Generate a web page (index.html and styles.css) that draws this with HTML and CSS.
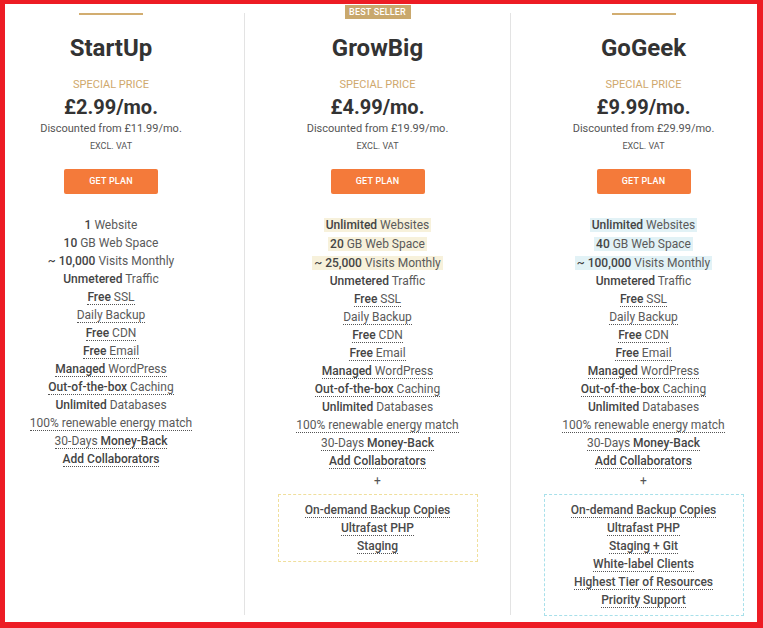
FILE: index.html
```html
<!DOCTYPE html>
<html lang="en">
<head>
<meta charset="utf-8">
<title>Plans</title>
<link rel="stylesheet" href="styles.css">
</head>
<body>
<div class="frame">
  <div class="cols">
    <section class="plan">
      <div class="topline"></div>
      <h2 class="name">StartUp</h2>
      <div class="special">SPECIAL PRICE</div>
      <div class="price">£2.99/mo.</div>
      <div class="was">Discounted from £11.99/mo.</div>
      <div class="vat">EXCL. VAT</div>
      <a class="btn" href="#">GET PLAN</a>
      <ul class="features">
        <li><b>1</b> Website</li>
        <li><b>10</b> GB Web Space</li>
        <li><b>~ 10,000</b> Visits Monthly</li>
        <li><b>Unmetered</b> Traffic</li>
        <li><span class="tip"><b>Free</b> SSL</span></li>
        <li><span class="tip">Daily Backup</span></li>
        <li><span class="tip"><b>Free</b> CDN</span></li>
        <li><span class="tip"><b>Free</b> Email</span></li>
        <li><span class="tip"><b>Managed</b> WordPress</span></li>
        <li><span class="tip"><b>Out-of-the-box</b> Caching</span></li>
        <li><b>Unlimited</b> Databases</li>
        <li><span class="tip">100% renewable energy match</span></li>
        <li><span class="tip">30-Days <b>Money-Back</b></span></li>
        <li><span class="tip"><b>Add Collaborators</b></span></li>
      </ul>
    </section>

    <section class="plan plan-grow">
      <div class="badge">BEST SELLER</div>
      <div class="topline blank"></div>
      <h2 class="name">GrowBig</h2>
      <div class="special">SPECIAL PRICE</div>
      <div class="price">£4.99/mo.</div>
      <div class="was">Discounted from £19.99/mo.</div>
      <div class="vat">EXCL. VAT</div>
      <a class="btn" href="#">GET PLAN</a>
      <ul class="features">
        <li class="hl"><span class="mark"><b>Unlimited</b> Websites</span></li>
        <li class="hl"><span class="mark"><b>20</b> GB Web Space</span></li>
        <li class="hl"><span class="mark"><b>~ 25,000</b> Visits Monthly</span></li>
        <li><b>Unmetered</b> Traffic</li>
        <li><span class="tip"><b>Free</b> SSL</span></li>
        <li><span class="tip">Daily Backup</span></li>
        <li><span class="tip"><b>Free</b> CDN</span></li>
        <li><span class="tip"><b>Free</b> Email</span></li>
        <li><span class="tip"><b>Managed</b> WordPress</span></li>
        <li><span class="tip"><b>Out-of-the-box</b> Caching</span></li>
        <li><b>Unlimited</b> Databases</li>
        <li><span class="tip">100% renewable energy match</span></li>
        <li><span class="tip">30-Days <b>Money-Back</b></span></li>
        <li><span class="tip"><b>Add Collaborators</b></span></li>
      </ul>
      <div class="plus">+</div>
      <ul class="addons">
        <li><span class="tip">On-demand Backup Copies</span></li>
        <li><span class="tip">Ultrafast PHP</span></li>
        <li><span class="tip">Staging</span></li>
      </ul>
    </section>

    <section class="plan plan-geek">
      <div class="topline"></div>
      <h2 class="name">GoGeek</h2>
      <div class="special">SPECIAL PRICE</div>
      <div class="price">£9.99/mo.</div>
      <div class="was">Discounted from £29.99/mo.</div>
      <div class="vat">EXCL. VAT</div>
      <a class="btn" href="#">GET PLAN</a>
      <ul class="features">
        <li class="hl"><span class="mark"><b>Unlimited</b> Websites</span></li>
        <li class="hl"><span class="mark"><b>40</b> GB Web Space</span></li>
        <li class="hl"><span class="mark"><b>~ 100,000</b> Visits Monthly</span></li>
        <li><b>Unmetered</b> Traffic</li>
        <li><span class="tip"><b>Free</b> SSL</span></li>
        <li><span class="tip">Daily Backup</span></li>
        <li><span class="tip"><b>Free</b> CDN</span></li>
        <li><span class="tip"><b>Free</b> Email</span></li>
        <li><span class="tip"><b>Managed</b> WordPress</span></li>
        <li><span class="tip"><b>Out-of-the-box</b> Caching</span></li>
        <li><b>Unlimited</b> Databases</li>
        <li><span class="tip">100% renewable energy match</span></li>
        <li><span class="tip">30-Days <b>Money-Back</b></span></li>
        <li><span class="tip"><b>Add Collaborators</b></span></li>
      </ul>
      <div class="plus">+</div>
      <ul class="addons">
        <li><span class="tip">On-demand Backup Copies</span></li>
        <li><span class="tip">Ultrafast PHP</span></li>
        <li><span class="tip">Staging + Git</span></li>
        <li><span class="tip">White-label Clients</span></li>
        <li><span class="tip">Highest Tier of Resources</span></li>
        <li><span class="tip">Priority Support</span></li>
      </ul>
    </section>
  </div>
</div>
</body>
</html>
```

FILE: styles.css
```css
* { box-sizing: border-box; }

body {
  margin: 0;
  font-family: Roboto, "Liberation Sans", Arial, sans-serif;
  background: #fff;
}

.frame {
  width: 763px;
  height: 628px;
  border-style: solid;
  border-color: #ed1c24;
  border-width: 4px 6px 6px 5px;
  overflow: hidden;
  background: #fff;
}

.cols {
  display: flex;
  margin-left: -27px;
  margin-top: 9px;
  height: 602px;
}

.plan {
  flex: none;
  width: 266px;
  display: flex;
  flex-direction: column;
  align-items: center;
  position: relative;
  text-align: center;
}

.plan > * {
  flex-shrink: 0;
}

.plan + .plan {
  border-left: 1px solid #e3e3e3;
}

.topline {
  width: 64px;
  height: 2px;
  background: #d2ad70;
}

.topline.blank {
  visibility: hidden;
}

.badge {
  position: absolute;
  top: -8px;
  left: 50%;
  transform: translateX(-50%);
  width: 66px;
  height: 14px;
  line-height: 14px;
  background: #c9a86d;
  color: #fff;
  font-size: 9px;
  font-weight: 500;
  letter-spacing: 0.2px;
}

.name {
  margin: 19px 0 0;
  font-size: 24px;
  line-height: 28px;
  font-weight: 700;
  color: #333;
}

.special {
  margin-top: 16px;
  font-size: 11px;
  line-height: 14px;
  color: #cfa86c;
}

.price {
  margin-top: 3px;
  font-size: 20px;
  line-height: 24px;
  font-weight: 700;
  color: #333;
}

.was {
  margin-top: 1.5px;
  font-size: 11px;
  line-height: 16px;
  color: #555;
}

.vat {
  margin-top: 3px;
  font-size: 9px;
  line-height: 12px;
  color: #555;
}

.btn {
  display: block;
  margin-top: 17.5px;
  width: 94px;
  height: 25px;
  line-height: 25px;
  background: #f47a3a;
  color: #fff;
  font-size: 9px;
  font-weight: 500;
  letter-spacing: 0.2px;
  border-radius: 2px;
  text-decoration: none;
}

.features {
  list-style: none;
  margin: 22px 0 0;
  padding: 0;
  font-size: 12px;
  line-height: 18px;
  color: #5a5a5a;
}

.features b,
.addons b {
  font-weight: 500;
  color: #444;
}

.tip {
  border-bottom: 1px dotted #555;
}

.features li.hl + li.hl {
  margin-top: 1px;
}

.mark {
  display: inline-block;
  line-height: 14px;
  padding: 0 2px;
  background: #f7f1db;
}

.plan-geek .mark {
  background: #e2f2f6;
}

.plus {
  margin-top: 2px;
  font-size: 12px;
  line-height: 18px;
  color: #555;
}

.addons {
  list-style: none;
  margin: 4px 0 0;
  padding: 6px 0;
  width: 200px;
  border: 1px dashed #f0df9c;
  font-size: 12px;
  line-height: 18px;
  font-weight: 500;
  color: #4a4a4a;
}

.plan-geek .addons {
  border-color: #a8e0ea;
}
```
